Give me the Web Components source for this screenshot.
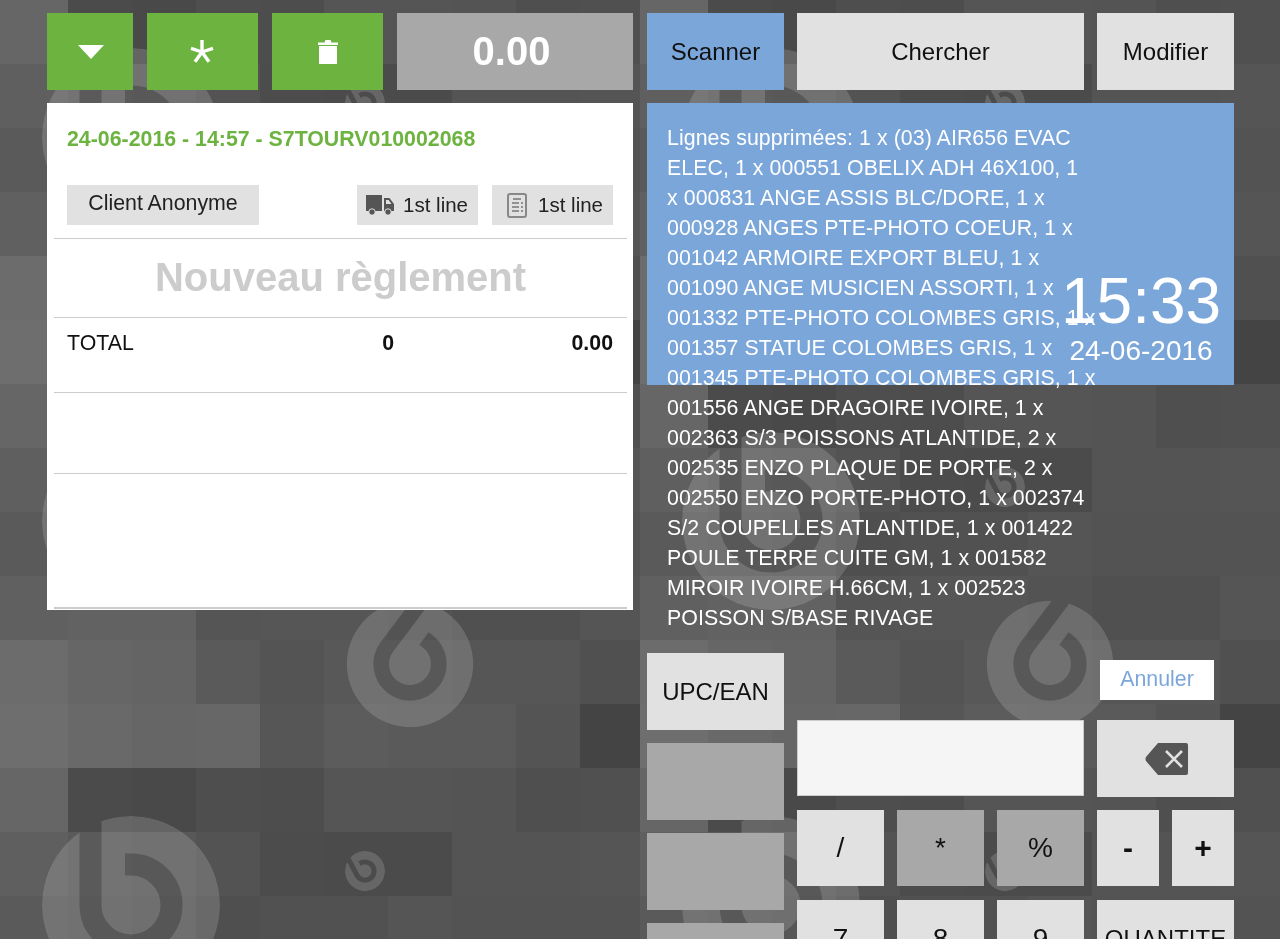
<!DOCTYPE html>
<html lang="fr">
<head>
<meta charset="utf-8">
<title>Caisse</title>
<style>
  html { background: #555; }
  html, body { margin: 0; height: 939px; overflow: hidden; }
  body { font-family: "Liberation Sans", Arial, sans-serif; }
</style>
</head>
<body>
<pos-backdrop></pos-backdrop>
<pos-screen>
  <pos-ticket slot="left"></pos-ticket>
  <pos-register slot="right">
    <pos-log slot="log" time="15:33" date="24-06-2016">Lignes supprimées: 1 x (03) AIR656 EVAC<br>ELEC, 1 x 000551 OBELIX ADH 46X100, 1<br>x 000831 ANGE ASSIS BLC/DORE, 1 x<br>000928 ANGES PTE-PHOTO COEUR, 1 x<br>001042 ARMOIRE EXPORT BLEU, 1 x<br>001090 ANGE MUSICIEN ASSORTI, 1 x<br>001332 PTE-PHOTO COLOMBES GRIS, 1 x<br>001357 STATUE COLOMBES GRIS, 1 x<br>001345 PTE-PHOTO COLOMBES GRIS, 1 x<br>001556 ANGE DRAGOIRE IVOIRE, 1 x<br>002363 S/3 POISSONS ATLANTIDE, 2 x<br>002535 ENZO PLAQUE DE PORTE, 2 x<br>002550 ENZO PORTE-PHOTO, 1 x 002374<br>S/2 COUPELLES ATLANTIDE, 1 x 001422<br>POULE TERRE CUITE GM, 1 x 001582<br>MIROIR IVOIRE H.66CM, 1 x 002523<br>POISSON S/BASE RIVAGE</pos-log>
    <pos-keypad slot="keypad"></pos-keypad>
  </pos-register>
</pos-screen>

<script>
// one button style for the whole screen, tone and size come from attributes
class PosButton extends HTMLElement {
  constructor() {
    super();
    this.attachShadow({ mode: 'open' }).innerHTML = `
      <style>
        :host {
          display: flex;
          align-items: center;
          justify-content: center;
          box-sizing: border-box;
          height: 77px;
          min-width: 0;
          background: #e1e1e1;
          color: #111;
          font-size: 24px;
          white-space: nowrap;
        }
        :host([tone="green"]) { background: #6cb33f; color: #fff; }
        :host([tone="blue"]) { background: #7ba6da; }
        :host([tone="off"]) { background: #a8a8a8; }
        :host([tone="total"]) { background: #a8a8a8; color: #fff; font-size: 40px; font-weight: bold; padding-right: 7px; }
        :host([size="key"]) { font-size: 28px; }
        :host([size="sign"]) { font-size: 30px; font-weight: bold; }
        :host([short]) { height: 76px; }
      </style>
      <slot></slot>`;
  }
}

// mosaic wallpaper, 640x384 tile with three logos
class PosBackdrop extends HTMLElement {
  constructor() {
    super();
    const rows = [
      [0x66, 0x4b, 0x49, 0x4e, 0x4d, 0x55, 0x55, 0x54, 0x4f, 0x50],
      [0x5f, 0x5a, 0x58, 0x53, 0x4c, 0x4b, 0x4b, 0x54, 0x54, 0x55],
      [0x5a, 0x58, 0x56, 0x4f, 0x51, 0x51, 0x55, 0x53, 0x53, 0x53],
      [0x60, 0x62, 0x62, 0x55, 0x56, 0x56, 0x53, 0x50, 0x50, 0x55],
      [0x6c, 0x66, 0x64, 0x5a, 0x54, 0x58, 0x58, 0x56, 0x56, 0x50],
      [0x6e, 0x69, 0x66, 0x67, 0x56, 0x5c, 0x5a, 0x5a, 0x54, 0x44]
    ];
    let cells = '';
    rows.forEach((row, r) => {
      row.forEach((v, c) => {
        const hex = v.toString(16);
        // first column is 68 wide, last one stops at the tile edge
        const x = c === 0 ? 0 : 4 + c * 64;
        const w = c === 0 ? 68 : c === 9 ? 60 : 64;
        cells += `<rect x="${x}" y="${r * 64}" width="${w}" height="64" fill="#${hex}${hex}${hex}"/>`;
      });
    });
    const logo = (x, y, s, a) =>
      `<g transform="translate(${x} ${y}) rotate(${a}) scale(${s})"><circle r="89" fill="#fff" fill-opacity=".15" mask="url(#gap)"/></g>`;
    this.attachShadow({ mode: 'open' }).innerHTML = `
      <style>
        :host { position: fixed; inset: 0; z-index: -1; display: block; }
        svg { display: block; width: 100%; height: 100%; }
      </style>
      <svg xmlns="http://www.w3.org/2000/svg">
        <defs>
          <mask id="gap" maskUnits="userSpaceOnUse" x="-100" y="-100" width="200" height="200">
            <circle r="89" fill="#fff"/>
            <path d="M-40.5 -120V0A40.5 40.5 0 1 0 40.5 0A40.5 40.5 0 0 0 0 -40.5H-6" fill="none" stroke="#000" stroke-width="22"/>
          </mask>
          <pattern id="tile" width="640" height="384" patternUnits="userSpaceOnUse">
            ${cells}
            ${logo(131, 137, 1, 0)}
            ${logo(410, 280, 0.711, 37)}
            ${logo(365, 103, 0.225, -28)}
          </pattern>
        </defs>
        <rect width="100%" height="100%" fill="url(#tile)"/>
      </svg>`;
  }
}

class PosScreen extends HTMLElement {
  constructor() {
    super();
    this.attachShadow({ mode: 'open' }).innerHTML = `
      <style>
        :host {
          display: grid;
          grid-template-columns: 586px 587px;
          gap: 14px;
          box-sizing: border-box;
          height: 939px;
          padding: 13px 0 0 47px;
          overflow: hidden;
        }
      </style>
      <slot name="left"></slot>
      <slot name="right"></slot>`;
  }
}

class PosTicket extends HTMLElement {
  constructor() {
    super();
    this.attachShadow({ mode: 'open' }).innerHTML = `
      <style>
        :host { display: block; color: #111; font-size: 21.33px; }
        .actions {
          display: grid;
          grid-template-columns: 86px 111px 111px 236px;
          gap: 14px;
          margin-bottom: 13px;
        }
        .panel {
          box-sizing: border-box;
          height: 507px;
          padding: 0 6px 0 7px;
          background: #fff;
        }
        .head { box-sizing: border-box; height: 136px; padding: 0 14px 0 13px; border-bottom: 1px solid #ccc; }
        .stamp { padding-top: 24px; height: 58px; line-height: 24px; font-weight: bold; color: #6cb33f; }
        .chips { display: flex; gap: 14px; }
        .chip {
          display: flex;
          align-items: center;
          justify-content: flex-end;
          box-sizing: border-box;
          width: 121px;
          height: 40px;
          padding-right: 10px;
          background: #e1e1e1;
          font-size: 20.5px;
          color: #222;
        }
        .chip svg { margin-right: 9px; }
        .chip + .chip + .chip svg { margin-right: 11px; }
        .client { width: 192px; margin-right: auto; padding: 0 0 4px; justify-content: center; font-size: 21.33px; }
        .title {
          box-sizing: border-box;
          height: 79px;
          padding-top: 3px;
          line-height: 70px;
          border-bottom: 1px solid #ccc;
          text-align: center;
          font-size: 40px;
          font-weight: bold;
          color: #ccc;
        }
        .total {
          display: grid;
          grid-template-columns: 327px 219px;
          box-sizing: border-box;
          height: 75px;
          padding: 13px 14px 0 13px;
          line-height: 24px;
          border-bottom: 1px solid #ccc;
        }
        .total b { text-align: right; }
        .total b:nth-child(2) { grid-column: 1; grid-row: 1; }
        .total span { grid-column: 1; grid-row: 1; }
        .total b:last-child { grid-column: 2; }
        .blank { height: 81px; box-sizing: border-box; border-bottom: 1px solid #ccc; }
        .foot { height: 135px; box-sizing: border-box; border-bottom: 2px solid #ccc; }
        svg { display: block; flex: none; }
      </style>
      <div class="actions">
        <pos-button tone="green">
          <svg width="26" height="14" viewBox="0 0 26 14" style="display:block;margin-left:2px"><path d="M0 0H26L13 14Z" fill="#fff"/></svg>
        </pos-button>
        <pos-button tone="green">
          <svg width="26" height="26" viewBox="-13 -13 26 26" style="display:block;margin-left:-1px" fill="none" stroke="#fff" stroke-width="3.4"><path d="M0 0V-12M0 0L11 -3.6M0 0L7 9.7M0 0L-7 9.7M0 0L-11 -3.6"/></svg>
        </pos-button>
        <pos-button tone="green">
          <svg width="20" height="24" viewBox="0 0 20 24" style="display:block"><path d="M0 2.5H6.5L7.5 0H12.5L13.5 2.5H20V5H0Z" fill="#fff"/><path d="M1 6H19V24H1Z" fill="#fff"/></svg>
        </pos-button>
        <pos-button tone="total">0.00</pos-button>
      </div>
      <div class="panel">
        <div class="head">
          <div class="stamp">24-06-2016 - 14:57 - S7TOURV010002068</div>
          <div class="chips">
            <div class="chip client">Client Anonyme</div>
            <div class="chip">
              <svg width="28" height="20" viewBox="0 0 28 20"><path d="M0 0H16V16H0Z" fill="#555"/><path fill-rule="evenodd" d="M18 3H23.5L28 9V16H18ZM20 5V9H25.5L22.6 5Z" fill="#555"/><circle cx="6" cy="17" r="3.2" fill="#555" stroke="#e1e1e1"/><circle cx="22" cy="17" r="3.2" fill="#555" stroke="#e1e1e1"/></svg>
              <span>1st line</span>
            </div>
            <div class="chip">
              <svg width="20" height="25" viewBox="0 0 20 25"><rect x="1" y="1" width="18" height="23" rx="2" fill="none" stroke="#888" stroke-width="2"/><path d="M6 6H14M5 10H12M5 14H12M5 18H12M14 10H16M14 14H16M14 18H16" stroke="#777" stroke-width="1.5"/></svg>
              <span>1st line</span>
            </div>
          </div>
        </div>
        <div class="title">Nouveau règlement</div>
        <div class="total"><span>TOTAL</span><b>0</b><b>0.00</b></div>
        <div class="blank"></div>
        <div class="foot"></div>
      </div>`;
  }
}

class PosRegister extends HTMLElement {
  constructor() {
    super();
    this.attachShadow({ mode: 'open' }).innerHTML = `
      <style>
        :host { display: block; }
        .modes {
          display: grid;
          grid-template-columns: 137px 287px 137px;
          gap: 13px;
          margin-bottom: 13px;
        }
      </style>
      <div class="modes">
        <pos-button tone="blue">Scanner</pos-button>
        <pos-button>Chercher</pos-button>
        <pos-button>Modifier</pos-button>
      </div>
      <slot name="log"></slot>
      <slot name="keypad"></slot>`;
  }
}

class PosLog extends HTMLElement {
  static get observedAttributes() { return ['time', 'date']; }

  constructor() {
    super();
    this.attachShadow({ mode: 'open' }).innerHTML = `
      <style>
        :host {
          display: block;
          position: relative;
          box-sizing: border-box;
          height: 282px;
          margin-bottom: 268px;
          padding: 20px;
          background: #7ba6da;
          color: #fff;
          font-size: 21.33px;
          letter-spacing: .06px;
          line-height: 30px;
          white-space: nowrap;
        }
        .clock {
          position: absolute;
          top: 166px;
          right: 13px;
          width: 160px;
          letter-spacing: 0;
          text-align: center;
        }
        .time { font-size: 64px; line-height: 64px; }
        .date { font-size: 28px; line-height: 36px; }
      </style>
      <slot></slot>
      <div class="clock"><div class="time"></div><div class="date"></div></div>`;
  }

  attributeChangedCallback(name, oldVal, newVal) {
    this.shadowRoot.querySelector('.' + name).textContent = newVal;
  }
}

class PosKeypad extends HTMLElement {
  constructor() {
    super();
    this.attachShadow({ mode: 'open' }).innerHTML = `
      <style>
        :host {
          display: grid;
          grid-template-columns: 137px 437px;
          gap: 13px;
        }
        .side { display: flex; flex-direction: column; gap: 13px; }
        .keys {
          display: grid;
          grid-template-columns: 87px 87px 87px 62px 62px;
          grid-template-rows: 54px 77px 77px 77px;
          gap: 13px;
        }
        .cancel {
          grid-column: 4 / 6;
          box-sizing: border-box;
          width: 114px;
          height: 40px;
          margin: 7px 0 0 3px;
          background: #fff;
          color: #7ba6da;
          font-size: 21.33px;
          line-height: 38px;
          text-align: center;
        }
        .entry {
          grid-column: 1 / 4;
          grid-row: 2;
          box-sizing: border-box;
          height: 76px;
          background: #f5f5f5;
          border: 1px solid #ccc;
        }
        .wide { grid-column: 4 / 6; }
        svg { display: block; margin-left: 2px; }
      </style>
      <div class="side">
        <pos-button>UPC/EAN</pos-button>
        <pos-button tone="off"></pos-button>
        <pos-button tone="off"></pos-button>
        <pos-button tone="off"></pos-button>
      </div>
      <div class="keys">
        <div class="cancel">Annuler</div>
        <div class="entry"></div>
        <pos-button class="wide" style="grid-row:2">
          <svg width="44" height="32" viewBox="0 0 44 32"><path d="M13 0H41Q43 0 43 2V30Q43 32 41 32H13L1 18Q0 16 1 14Z" fill="#555"/><path d="M21 8L37 24M37 8L21 24" stroke="#e1e1e1" stroke-width="2.6"/></svg>
        </pos-button>
        <pos-button size="key" short>/</pos-button>
        <pos-button size="key" tone="off" short>*</pos-button>
        <pos-button size="key" tone="off" short>%</pos-button>
        <pos-button size="sign" short>-</pos-button>
        <pos-button size="sign" short>+</pos-button>
        <pos-button size="key">7</pos-button>
        <pos-button size="key">8</pos-button>
        <pos-button size="key">9</pos-button>
        <pos-button class="wide">QUANTITE</pos-button>
      </div>`;
  }
}

customElements.define('pos-button', PosButton);
customElements.define('pos-backdrop', PosBackdrop);
customElements.define('pos-screen', PosScreen);
customElements.define('pos-ticket', PosTicket);
customElements.define('pos-register', PosRegister);
customElements.define('pos-log', PosLog);
customElements.define('pos-keypad', PosKeypad);
</script>
</body>
</html>
